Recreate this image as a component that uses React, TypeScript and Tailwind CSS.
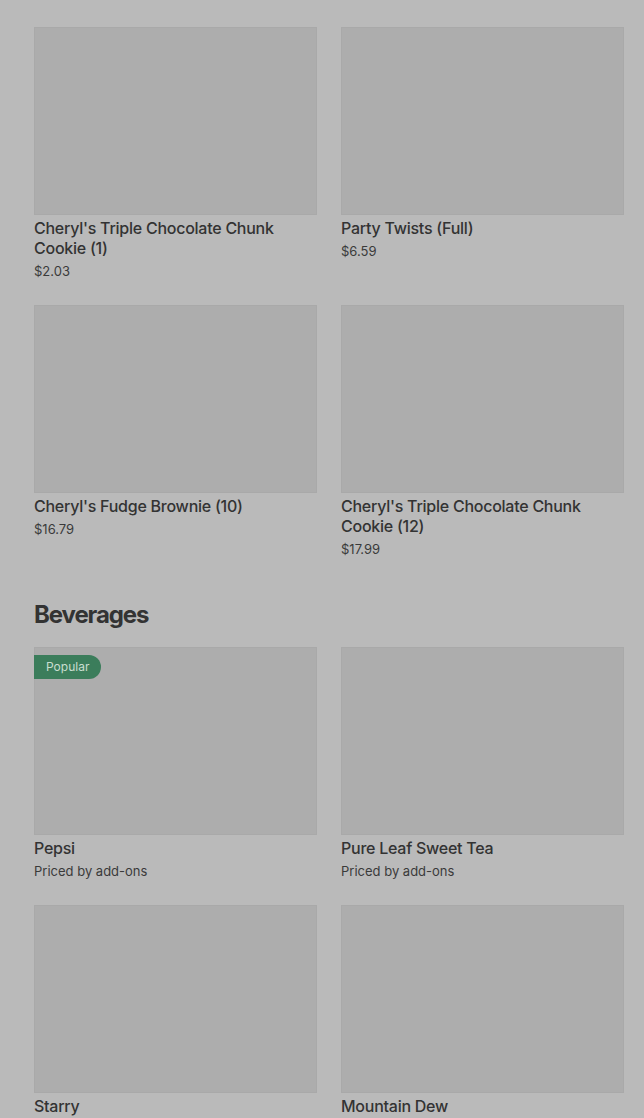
const font = { fontFamily: '"Inter", "Noto Sans", sans-serif' }

interface Item {
  name: string
  price: string
  popular?: boolean
}

const desserts: Item[] = [
  { name: "Cheryl's Triple Chocolate Chunk Cookie (1)", price: "$2.03" },
  { name: "Party Twists (Full)", price: "$6.59" },
  { name: "Cheryl's Fudge Brownie (10)", price: "$16.79" },
  { name: "Cheryl's Triple Chocolate Chunk Cookie (12)", price: "$17.99" },
]

const beverages: Item[] = [
  { name: "Pepsi", price: "Priced by add-ons", popular: true },
  { name: "Pure Leaf Sweet Tea", price: "Priced by add-ons" },
  { name: "Starry", price: "Priced by add-ons" },
  { name: "Mountain Dew", price: "Priced by add-ons" },
]

function ItemCard({ item }: { item: Item }) {
  return (
    <div className="flex flex-col">
      <div className="relative h-[188px] bg-[#adadad] border border-[#a9a9a9]">
        {item.popular && (
          <span className="absolute left-[-1px] top-[7px] h-6 pl-3 pr-3 flex items-center rounded-r-full bg-[#3b7d5b] text-[12px] text-[#c9ddd0]">
            Popular
          </span>
        )}
      </div>
      <div className="mt-[3px] text-[16px] leading-5 font-medium tracking-[-0.25px] text-[#333333] pr-6">{item.name}</div>
      <div className="mt-[3px] text-[13px] leading-5 text-[#3a3a3a]">{item.price}</div>
    </div>
  )
}

export default function App() {
  return (
    <div className="min-h-[1118px] bg-[#bababa] px-[34px] pt-[27px] overflow-hidden" style={font}>
      <div className="grid grid-cols-2 gap-x-6 gap-y-6 w-[590px]">
        {desserts.map((item) => (
          <ItemCard key={item.name} item={item} />
        ))}
      </div>
      <h2 className="mt-10 mb-4 text-[24px] leading-8 font-bold text-[#333333] tracking-[-1.1px]">Beverages</h2>
      <div className="grid grid-cols-2 gap-x-6 gap-y-6 w-[590px]">
        {beverages.map((item) => (
          <ItemCard key={item.name} item={item} />
        ))}
      </div>
    </div>
  )
}
